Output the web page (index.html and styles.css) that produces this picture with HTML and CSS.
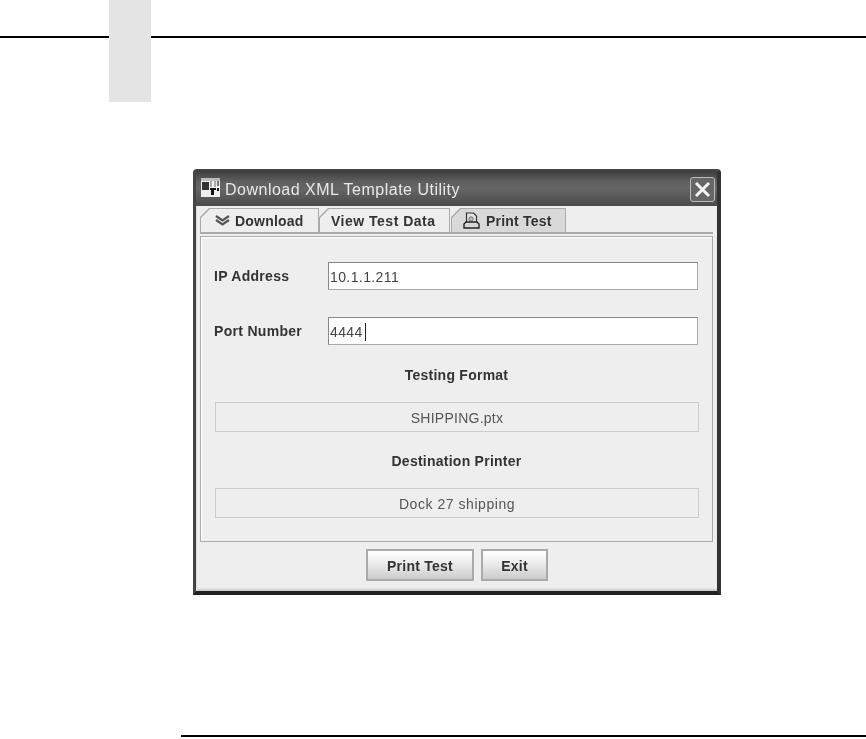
FILE: index.html
```html
<!DOCTYPE html>
<html lang="en">

<head>
  <meta charset="UTF-8">
  <meta name="viewport" content="width=device-width, initial-scale=1.0">
  <title>Download XML Template Utility</title>
  <link rel="stylesheet" href="styles.css">
</head>

<body>
  <div class="page-tab"></div>
  <hr class="top-rule">

  <div class="window">
    <div class="titlebar">
      <svg class="app-icon" width="19" height="19" viewBox="0 0 19 19">
        <rect width="19" height="19" fill="#eee" />
        <rect x="0" y="0" width="19" height="3" fill="#bbb" />
        <path d="M1 4h7v8H1z" fill="#333" />
        <path d="M9 3h2v6H9zM13 3h2v6h-2z" fill="#aaa" />
        <path d="M16 3h2v5h-2z" fill="#777" />
        <path d="M9 10h6v2h-2v5h-3v-5H9zM16 10h2v3h-2z" fill="#111" />
      </svg>
      <span class="title-text">Download XML Template Utility</span>
      <button class="close-btn" aria-label="Close">
        <svg width="17" height="17" viewBox="0 0 17 17">
          <path d="M2 2l13 13M15 2L2 15" stroke="#f4f4f4" stroke-width="3" fill="none" />
        </svg>
      </button>
    </div>

    <div class="window-body">
      <div class="tabs">
        <div class="tab tab-download">
          <div class="tab-face">
            <svg width="17" height="11" viewBox="0 0 17 11">
              <path d="M2 1l6.500 4.500L15 1M2 5l6.500 4.500L15 5" stroke="#555" stroke-width="2.200" fill="none" />
            </svg>
            Download
          </div>
        </div>
        <div class="tab tab-view">
          <div class="tab-face">View Test Data</div>
        </div>
        <div class="tab tab-print active">
          <div class="tab-face">
            <svg width="17" height="17" viewBox="0 0 17 17">
              <path d="M3.500 10V1h7l3 3v6" fill="#e4e4e4" stroke="#333" stroke-width="1.200" />
              <circle cx="8" cy="7" r="2.200" fill="#bbb" stroke="#777" />
              <path d="M3 10h11l2 2v4H1v-4z" fill="#d6d6d6" stroke="#222" stroke-width="1.400" />
            </svg>
            Print Test
          </div>
        </div>
      </div>

      <div class="panel">
        <div class="field-row">
          <label class="field-label">IP Address</label>
          <div class="text-input">10.1.1.211</div>
        </div>
        <div class="field-row">
          <label class="field-label">Port Number</label>
          <div class="text-input">4444<span class="caret"></span></div>
        </div>
        <div class="section-title">Testing Format</div>
        <div class="readout readout-file">SHIPPING.ptx</div>
        <div class="section-title">Destination Printer</div>
        <div class="readout">Dock 27 shipping</div>
      </div>

      <div class="buttons">
        <button class="btn btn-print">Print Test</button>
        <button class="btn btn-exit">Exit</button>
      </div>
    </div>
  </div>

  <hr class="bottom-rule">
</body>

</html>
```
FILE: styles.css
```css
* {
  box-sizing: border-box;
}

body {
  font-family: "Liberation Sans", Arial, sans-serif;
  background-color: #fff;
  color: #333;
  margin: 0;
  height: 739px;
  overflow: hidden;
  padding-top: 36px;
}

hr {
  border: none;
  margin: 0;
  background: #000;
  height: 2px;
}

/* grey thumb tab sits over the top rule */
.page-tab {
  position: absolute;
  left: 109px;
  top: 0;
  width: 42px;
  height: 102px;
  background: #e4e4e4;
}

.window {
  width: 528px;
  height: 426px;
  margin: 131px 0 0 193px;
  background: #eee;
  border-style: solid;
  border-color: #444 #333 #222 #444;
  border-width: 2px 4px 4px 3px;
  border-radius: 4px 4px 0 0;
  display: flex;
  flex-direction: column;
  filter: blur(0.35px);
}

.titlebar {
  height: 35px;
  flex: none;
  display: flex;
  align-items: center;
  padding: 0 2px 0 5px;
  background: linear-gradient(#3e3e3e, #5e5e5e 30%, #666 50%, #4a4a4a);
}

.app-icon {
  flex: none;
  margin-bottom: 2px;
}

.title-text {
  margin-left: 5px;
  padding-top: 3px;
  color: #e8e8e8;
  font-size: 16px;
  letter-spacing: 0.5px;
}

.close-btn {
  margin: 2px 0 0 auto;
  width: 25px;
  height: 25px;
  padding: 0;
  display: flex;
  align-items: center;
  justify-content: center;
  background: #666;
  border: 1px solid #bbb;
  border-radius: 3px;
}

.window-body {
  flex: 1;
  display: flex;
  flex-direction: column;
  padding: 2px 4px 0 3px;
  border-left: 1px solid #ddd;
  box-shadow: inset 0 -3px 2px -1px #ccc;
}

.tabs {
  display: flex;
  height: 26px;
  flex: none;
  border-bottom: 2px solid #aaa;
}

.tab {
  background: #aaa;
  padding: 1px 1px 0;
  height: 24px;
  clip-path: polygon(9px 0, 100% 0, 100% 100%, 0 100%, 0 9px);
}

.tab-face {
  height: 100%;
  display: flex;
  align-items: center;
  gap: 5px;
  background: #eee;
  font-size: 14px;
  font-weight: bold;
  letter-spacing: 0.2px;
  color: #333;
  clip-path: polygon(9px 0, 100% 0, 100% 100%, 0 100%, 0 9px);
}

.tab.active .tab-face {
  background: #d9d9d9;
}

.tab-download {
  width: 119px;
}

.tab-download .tab-face {
  padding-left: 13px;
  gap: 4px;
}

.tab-view {
  width: 131px;
}

.tab-view .tab-face {
  padding-left: 11px;
  letter-spacing: 0.5px;
}

.tab-print {
  width: 115px;
  margin-left: 1px;
}

.tab-print .tab-face {
  padding-left: 11px;
  gap: 6px;
}

.panel {
  height: 306px;
  flex: none;
  margin-top: 2px;
  padding: 25px 14px 0;
  border: 1px solid #aaa;
  box-shadow: inset 1px 1px 0 #fff;
}

.field-row {
  display: flex;
  align-items: center;
  height: 28px;
  margin-bottom: 27px;
}

.field-label {
  width: 113px;
  flex: none;
  margin-left: -1px;
  margin-right: 1px;
  font-size: 14px;
  font-weight: bold;
  letter-spacing: 0.3px;
}

.text-input {
  width: 370px;
  height: 28px;
  background: #fff;
  border: 1px solid #aaa;
  border-left-color: #888;
  border-top-color: #888;
  padding: 1px 0 0 1px;
  font-size: 14px;
  letter-spacing: 0.4px;
  color: #444;
  display: flex;
  align-items: center;
}

.caret {
  width: 1px;
  height: 18px;
  background: #222;
  margin-left: 2px;
}

.section-title {
  font-size: 14px;
  font-weight: bold;
  letter-spacing: 0.25px;
  text-align: center;
  height: 16px;
  line-height: 16px;
  margin: -5px 0 19px;
}

.readout {
  width: 484px;
  height: 30px;
  border: 1px solid #ccc;
  padding-top: 2px;
  font-size: 14px;
  letter-spacing: 0.55px;
  color: #555;
  display: flex;
  align-items: center;
  justify-content: center;
  margin-bottom: 26px;
}

.readout-file {
  letter-spacing: 0.25px;
}

.buttons {
  display: flex;
  justify-content: center;
  gap: 7px;
  margin-top: 7px;
  padding-left: 1px;
}

.btn {
  height: 32px;
  border: 2px solid #aaa;
  padding: 1px 0 0;
  background: linear-gradient(#fff, #eee 40%, #ccc);
  font-family: "Liberation Sans", Arial, sans-serif;
  font-size: 14px;
  font-weight: bold;
  letter-spacing: 0.25px;
  color: #333;
}

.btn-print {
  width: 108px;
}

.btn-exit {
  width: 67px;
}

.bottom-rule {
  margin: 140px 0 0 181px;
}
```
